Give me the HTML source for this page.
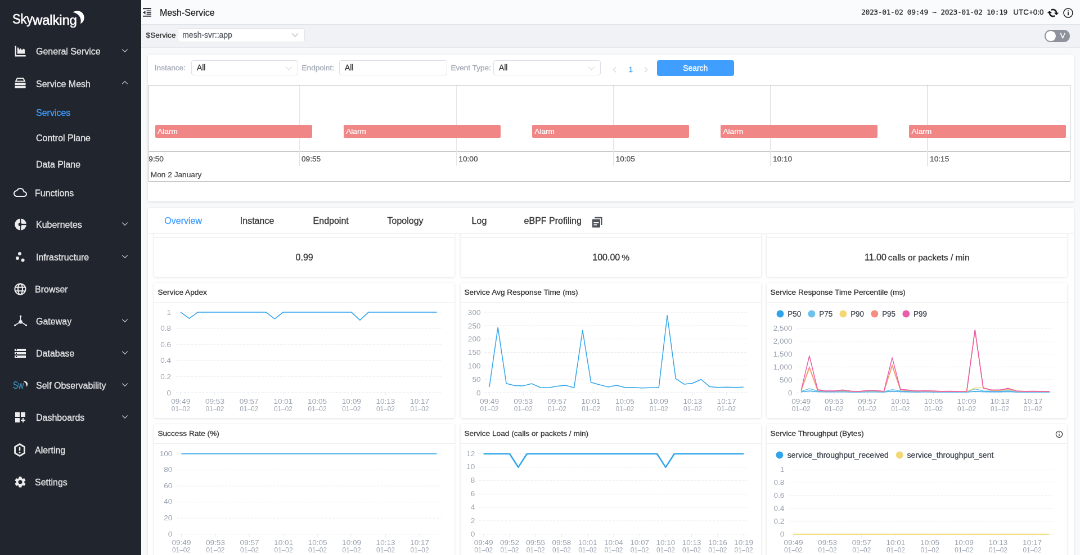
<!DOCTYPE html>
<html lang="en"><head><meta charset="utf-8"><title>Mesh-Service - SkyWalking</title>
<style>
*{box-sizing:border-box;margin:0;padding:0}
html,body{width:1080px;height:555px;overflow:hidden;background:#f7f9fa}
body{-webkit-text-stroke-width:.300px;font-family:"Liberation Sans",Arial,Helvetica,sans-serif;color:#3d444f;-webkit-font-smoothing:antialiased}
#root{will-change:transform;position:absolute;left:0;top:0;width:1920px;height:987px;transform:scale(.5625);transform-origin:0 0;overflow:hidden;background:#f7f9fa}
.abs{position:absolute}
.side{position:absolute;left:0;top:0;width:250.5px;height:987px;background:#21252d;color:#e3e4e6}
.mi{position:absolute;left:0;width:250px;height:56px;line-height:56px;font-size:16px;white-space:nowrap}
.mi .ic{position:absolute;left:24px;top:16px;width:24px;height:24px}
.mi .tx{position:absolute;left:64px;top:1.200px}
.mi.leaf .tx{left:62px}
.mi .chev{position:absolute;left:216px;top:21px;width:12px;height:12px}
.sub{position:absolute;left:64px;font-size:16px;height:46px;line-height:47.500px;white-space:nowrap}
.sub.on{color:#409eff}
.nav{position:absolute;left:250.5px;top:0;width:1669.5px;height:44px;background:#fafbfc;border-bottom:1px solid #dfe4e8}
.tool{position:absolute;left:250.5px;top:44px;width:1669.5px;height:41px;background:#f0f2f5;border-bottom:1px solid #e4e8ec}
.card{position:absolute;background:#fff;border-radius:3px;box-shadow:0 1px 4px 0 rgba(0,0,0,.13)}
.sel{position:absolute;background:#fff;border:1px solid #dcdfe6;border-radius:4px;font-size:13px;color:#303133;white-space:nowrap}
.sel .v{position:absolute;left:9px;top:1px;font-size:13.800px}
.sel svg{position:absolute;right:9px}
.lab{position:absolute;font-size:13.600px;color:#a4aab5;margin-top:.200px;white-space:nowrap}
.wt{position:absolute;left:6.100px;font-size:13.700px;color:#333;white-space:nowrap}
.num .u{font-size:15.500px;margin-left:3px}
svg text{-webkit-text-stroke-width:0;font-family:"Liberation Sans",Arial,sans-serif}
</style></head><body><div id="root">
<aside class="side"><div class="abs" style="left:22.5px;top:14px;height:44px;width:140px;color:#fff;white-space:nowrap;-webkit-text-stroke:.550px #fff">
<span class="abs" style="left:-1px;top:5.500px;font-size:23.5px;line-height:28px;transform:scaleX(.94);transform-origin:0 0;letter-spacing:-.3px">Sky</span>
<span class="abs" style="left:35.5px;top:8.000px;font-size:23px;line-height:28px;transform:scaleX(1.045);transform-origin:0 0;letter-spacing:-.2px">walking</span>
</div>
<svg class="abs" style="left:0;top:1.200px" width="160" height="60" viewBox="0 0 160 60"><path d="M129.200 20.800C134 17.300 141 17.300 145.200 20.800 149.300 24.300 150.600 30 149 34.600 148 37.600 146 40 142.900 41.300 144.600 36 143.600 31 140.600 27.200 137.700 23.600 134 21.600 129.200 20.800z" fill="#fff"/></svg><div class="mi" style="top:63.1px"><svg class="ic" viewBox="0 0 24 24"><path fill="#ededee" d="M2.6 2.6h2.3v16.3h16.8v2.5H2.6z"/><path fill="#ededee" d="M6.800 16.600V5.600h1.900l1.900 3.800 2.100-2.600 2.300 3.400 2.500-2.600 2.600 1.400v7.600z"/></svg><span class="tx">General Service</span><svg class="chev" viewBox="0 0 12 12"><path d="M1.2 3.6 6 8.4 10.8 3.6" fill="none" stroke="#c9cbd0" stroke-width="1.3"/></svg></div><div class="mi" style="top:120.4px"><svg class="ic" viewBox="0 0 24 24"><path fill="#ededee" d="M6 2.3h12l3.6 7.2H2.4zM7.2 4.3 5.6 7.6h12.8l-1.6-3.3z" fill-rule="evenodd"/><rect fill="#ededee" x="2.4" y="11" width="19.2" height="4" rx=".6"/><rect fill="#ededee" x="2.4" y="16.6" width="19.2" height="4.2" rx=".6"/></svg><span class="tx">Service Mesh</span><svg class="chev" viewBox="0 0 12 12"><path d="M1.2 8.4 6 3.6 10.8 8.4" fill="none" stroke="#c9cbd0" stroke-width="1.3"/></svg></div><div class="mi leaf" style="top:314.4px"><svg class="ic" viewBox="0 0 24 24"><path fill="#ededee" d="M19.35 10.04C18.67 6.59 15.64 4 12 4 9.11 4 6.6 5.64 5.35 8.04 2.34 8.36 0 10.91 0 14c0 3.31 2.69 6 6 6h13c2.76 0 5-2.24 5-5 0-2.64-2.05-4.78-4.65-4.96zM19 18H6c-2.21 0-4-1.79-4-4s1.79-4 4-4h.71C7.37 7.69 9.48 6 12 6c3.04 0 5.5 2.46 5.5 5.5v.5H19c1.66 0 3 1.34 3 3s-1.34 3-3 3z"/></svg><span class="tx">Functions</span></div><div class="mi" style="top:371.3px"><svg class="ic" viewBox="0 0 24 24" style="margin-top:-.600px"><circle cx="12.600" cy="12" r="10.400" fill="#ededee"/><path d="M12.600 1v22" stroke="#21252d" stroke-width="1.600"/><path d="M12.600 12H24" stroke="#21252d" stroke-width="2.300"/><circle cx="11.600" cy="12" r="3" fill="#21252d"/></svg><span class="tx">Kubernetes</span><svg class="chev" viewBox="0 0 12 12"><path d="M1.2 3.6 6 8.4 10.8 3.6" fill="none" stroke="#c9cbd0" stroke-width="1.3"/></svg></div><div class="mi" style="top:428.5px"><svg class="ic" viewBox="0 0 24 24"><circle fill="#ededee" cx="7" cy="14" r="3"/><circle fill="#ededee" cx="11" cy="6" r="3"/><circle fill="#ededee" cx="16.6" cy="17.6" r="3"/></svg><span class="tx">Infrastructure</span><svg class="chev" viewBox="0 0 12 12"><path d="M1.2 3.6 6 8.4 10.8 3.6" fill="none" stroke="#c9cbd0" stroke-width="1.3"/></svg></div><div class="mi leaf" style="top:485.8px"><svg class="ic" viewBox="0 0 24 24" fill="none" stroke="#ededee" stroke-width="2"><circle cx="12" cy="12" r="9.6"/><ellipse cx="12" cy="12" rx="4" ry="9.6"/><path d="M3.4 8.7h17.2M3.4 15.3h17.2"/></svg><span class="tx">Browser</span></div><div class="mi" style="top:543.0px"><svg class="ic" viewBox="0 0 24 24"><g stroke="#ededee" stroke-width="1.500" stroke-linecap="round"><path d="M12.6 13V3.4M12.6 13 3 19M12.6 13 22.2 19"/></g><circle cx="12.6" cy="13.2" r="3.200" fill="#ededee"/><circle cx="12.6" cy="3.2" r="1.6" fill="#ededee"/><circle cx="2.6" cy="19.4" r="1.6" fill="#ededee"/><circle cx="22.6" cy="19.4" r="1.6" fill="#ededee"/></svg><span class="tx">Gateway</span><svg class="chev" viewBox="0 0 12 12"><path d="M1.2 3.6 6 8.4 10.8 3.6" fill="none" stroke="#c9cbd0" stroke-width="1.3"/></svg></div><div class="mi" style="top:600.1px"><svg class="ic" viewBox="0 0 24 24"><path fill="#ededee" d="M2 20h20v-4H2v4zm2-3h2v2H4v-2zM2 4v4h20V4H2zm4 3H4V5h2v2zm-4 7h20v-4H2v4zm2-3h2v2H4v-2z"/></svg><span class="tx">Database</span><svg class="chev" viewBox="0 0 12 12"><path d="M1.2 3.6 6 8.4 10.8 3.6" fill="none" stroke="#c9cbd0" stroke-width="1.3"/></svg></div><div class="mi" style="top:657.3px"><svg class="ic" viewBox="0 0 24 24" style="overflow:visible"><text x="-1" y="18" font-size="17.500" fill="#3f9fd6" textLength="19.500" lengthAdjust="spacingAndGlyphs">Sw</text><path d="M18 5c3.800-.8 7 1.600 6.800 5.200-.1 1.600-.8 2.800-1.900 3.600.9-3.600-1-7-4.900-8.800z" fill="#f1f1f1" stroke="#f1f1f1" stroke-width=".8"/></svg><span class="tx">Self Observability</span><svg class="chev" viewBox="0 0 12 12"><path d="M1.2 3.6 6 8.4 10.8 3.6" fill="none" stroke="#c9cbd0" stroke-width="1.3"/></svg></div><div class="mi" style="top:714.2px"><svg class="ic" viewBox="0 0 24 24"><path fill="#ededee" d="M3 3h8v8H3zm10 0h8v8h-8zM3 13h8v8H3zm15 0h-2v3h-3v2h3v3h2v-3h3v-2h-3z"/></svg><span class="tx">Dashboards</span><svg class="chev" viewBox="0 0 12 12"><path d="M1.2 3.6 6 8.4 10.8 3.6" fill="none" stroke="#c9cbd0" stroke-width="1.3"/></svg></div><div class="mi leaf" style="top:771.5px"><svg class="ic" viewBox="0 0 24 24"><path d="M11 1.6 19.4 6.4V17.6L11 22.4 2.6 17.6V6.4z" fill="none" stroke="#ededee" stroke-width="2.900" stroke-linejoin="round"/><rect x="9.700" y="6.800" width="2.600" height="6.600" rx="1" fill="#ededee"/><circle cx="11" cy="16.400" r="1.500" fill="#ededee"/></svg><span class="tx">Alerting</span></div><div class="mi leaf" style="top:828.7px"><svg class="ic" viewBox="0 0 24 24"><path fill="#ededee" d="M19.14 12.94c.04-.3.06-.61.06-.94 0-.32-.02-.64-.07-.94l2.03-1.58c.18-.14.23-.41.12-.61l-1.92-3.32c-.12-.22-.37-.29-.59-.22l-2.39.96c-.5-.38-1.03-.7-1.62-.94l-.36-2.54c-.04-.24-.24-.41-.48-.41h-3.84c-.24 0-.43.17-.47.41l-.36 2.54c-.59.24-1.13.57-1.62.94l-2.39-.96c-.22-.08-.47 0-.59.22L2.74 8.87c-.12.21-.08.47.12.61l2.03 1.58c-.05.3-.09.63-.09.94s.02.64.07.94l-2.03 1.58c-.18.14-.23.41-.12.61l1.92 3.32c.12.22.37.29.59.22l2.39-.96c.5.38 1.03.7 1.62.94l.36 2.54c.05.24.24.41.48.41h3.84c.24 0 .44-.17.47-.41l.36-2.54c.59-.24 1.13-.56 1.62-.94l2.39.96c.22.08.47 0 .59-.22l1.92-3.32c.12-.22.07-.47-.12-.61l-2.01-1.58zM12 15.6c-1.98 0-3.6-1.62-3.6-3.6s1.62-3.6 3.6-3.6 3.6 1.62 3.6 3.6-1.62 3.6-3.6 3.6z"/></svg><span class="tx">Settings</span></div><div class="sub on" style="top:176.5px">Services</div><div class="sub" style="top:222.3px">Control Plane</div><div class="sub" style="top:268.6px">Data Plane</div></aside>
<header class="nav"></header><div class="tool"></div>
<svg class="abs" style="left:254px;top:13px" width="16" height="18" viewBox="0 0 16 18" fill="#2a2f36"><rect x=".5" y="1.100" width="14.500" height="2.100"/><rect x="6.600" y="5.500" width="8.400" height="1.600"/><rect x="6.600" y="8.500" width="8.400" height="1.600"/><rect x="6.600" y="11.400" width="8.400" height="1.600"/><rect x=".5" y="14.800" width="14.500" height="1.900"/><path d="M.5 9.300 4.500 5.800V12.800z"/></svg><div class="abs" style="left:283.9px;top:8.9px;font-size:16px;line-height:28px;color:#222;white-space:nowrap;-webkit-text-stroke:.25px #222">Mesh-Service</div><div class="abs" style="left:1531.1px;top:11.9px;font-family:'DejaVu Sans Mono','Liberation Mono',monospace;font-size:13px;letter-spacing:-.400px;line-height:20px;color:#222;white-space:pre;-webkit-text-stroke:.200px #222">2023-01-02 09:49 ~ 2023-01-02 10:19</div><div class="abs" style="left:1801.2px;top:12.0px;font-size:13.5px;line-height:20px;color:#222;white-space:nowrap">UTC+0:0</div><svg class="abs" style="left:1862.0px;top:13.3px" width="20" height="20" viewBox="0 0 24 24"><path transform="translate(12 12) scale(-1.04 1.04) translate(-12 -12)" fill="#111" d="M19 8l-4 4h3c0 3.310-2.690 6-6 6-1.010 0-1.970-.25-2.800-.7l-1.460 1.460C8.970 19.540 10.430 20 12 20c4.420 0 8-3.580 8-8h3l-4-4zM6 12c0-3.310 2.690-6 6-6 1.010 0 1.970.25 2.800.7l1.460-1.460C15.030 4.460 13.570 4 12 4c-4.420 0-8 3.580-8 8H1l4 4 4-4H6z" stroke="#111" stroke-width=".900"/></svg><svg class="abs" style="left:1888.5px;top:12.7px" width="20" height="20" viewBox="0 0 20 20"><circle cx="10" cy="10" r="8.000" fill="none" stroke="#1a1a1a" stroke-width="1.500"/><rect x="9.100" y="8.600" width="1.800" height="5.600" fill="#111"/><circle cx="10" cy="6.300" r="1.100" fill="#111"/></svg><div class="abs" style="left:259.6px;top:53.3px;font-size:13.600px;line-height:20px;color:#333;white-space:nowrap">$Service</div><div class="sel" style="left:315.7px;top:50.3px;width:226.5px;height:24.4px;line-height:22.4px;border-color:#dfe2e8;font-size:14px;color:#5a5e66"><span class="v" style="left:7.500px;top:0;font-size:14px">mesh-svr::app</span><svg style="top:5.2px;right:10px" width="13" height="12" viewBox="0 0 13 12"><path d="M1 3.500 6.500 9 12 3.500" fill="none" stroke="#b4b8bf" stroke-width="1.100"/></svg></div><div class="abs" style="left:1857.4px;top:52.8px;width:44.8px;height:21.9px;border-radius:10.9px;background:#8e939b"><div class="abs" style="left:2px;top:2px;width:17.9px;height:17.9px;border-radius:50%;background:#fff"></div><div class="abs" style="left:22.9px;top:0;width:18px;text-align:center;font-size:13.500px;line-height:21.9px;color:#fff">V</div></div>
<div class="card" style="left:262.8px;top:96.9px;width:1646.0px;height:261.5px;"></div><div class="lab" style="left:274.8px;top:110.9px;line-height:20px">Instance:</div><div class="sel" style="left:340.1px;top:107.4px;width:190.0px;height:26.7px;line-height:24.7px"><span class="v">All</span><svg style="top:6.3px" width="13" height="12" viewBox="0 0 13 12"><path d="M1 3.500 6.500 9 12 3.500" fill="none" stroke="#c3c7ce" stroke-width="1.000"/></svg></div><div class="lab" style="left:536.5px;top:110.9px;line-height:20px">Endpoint:</div><div class="sel" style="left:603.0px;top:107.4px;width:192.2px;height:26.7px;line-height:24.7px"><span class="v">All</span></div><div class="lab" style="left:801.4px;top:110.9px;line-height:20px">Event Type:</div><div class="sel" style="left:877.0px;top:107.4px;width:190.9px;height:26.7px;line-height:24.7px"><span class="v">All</span><svg style="top:6.3px" width="13" height="12" viewBox="0 0 13 12"><path d="M1 3.500 6.500 9 12 3.500" fill="none" stroke="#c3c7ce" stroke-width="1.000"/></svg></div><svg class="abs" style="left:1087.3px;top:117.6px" width="12" height="12" viewBox="0 0 12 12"><path d="M8 1.500 3.500 6 8 10.500" fill="none" stroke="#d3d6dc" stroke-width="1.200"/></svg><div class="abs" style="left:1111.2px;top:113.6px;width:20px;text-align:center;font-size:13.500px;line-height:20px;color:#409eff">1</div><svg class="abs" style="left:1141.9px;top:117.6px" width="12" height="12" viewBox="0 0 12 12"><path d="M4 1.500 8.500 6 4 10.500" fill="none" stroke="#d3d6dc" stroke-width="1.200"/></svg><div class="abs" style="left:1167.5px;top:107.2px;width:137.4px;height:27.9px;line-height:29.4px;background:#409eff;border-radius:4px;color:#fff;font-size:13.900px;text-align:center">Search</div><div class="abs" style="left:264.4px;top:151.1px;width:1638.2px;height:171.7px;border:1px solid #bfbfbf;overflow:hidden;font-size:13.700px;color:#4d4d4d"><div class="abs" style="left:0;top:116.7px;width:100%;height:1px;background:#bfbfbf"></div><div class="abs" style="left:-12.91px;top:0;width:1.778px;height:143.0px;background:#e6e6e6"></div><div class="abs" style="left:-8.7px;top:121.4px;line-height:20px;white-space:nowrap">09:50</div><div class="abs" style="left:266.20px;top:0;width:1.778px;height:143.0px;background:#e6e6e6"></div><div class="abs" style="left:270.6px;top:121.4px;line-height:20px;white-space:nowrap">09:55</div><div class="abs" style="left:545.31px;top:0;width:1.778px;height:143.0px;background:#e6e6e6"></div><div class="abs" style="left:549.9px;top:121.4px;line-height:20px;white-space:nowrap">10:00</div><div class="abs" style="left:824.42px;top:0;width:1.778px;height:143.0px;background:#e6e6e6"></div><div class="abs" style="left:829.2px;top:121.4px;line-height:20px;white-space:nowrap">10:05</div><div class="abs" style="left:1103.53px;top:0;width:1.778px;height:143.0px;background:#e6e6e6"></div><div class="abs" style="left:1108.5px;top:121.4px;line-height:20px;white-space:nowrap">10:10</div><div class="abs" style="left:1382.64px;top:0;width:1.778px;height:143.0px;background:#e6e6e6"></div><div class="abs" style="left:1387.7px;top:121.4px;line-height:20px;white-space:nowrap">10:15</div><div class="abs" style="left:2.4px;top:148.8px;line-height:20px;white-space:nowrap">Mon 2 January</div><div class="abs" style="left:10.2px;top:70.1px;width:279.1px;height:22.9px;line-height:23.8px;background:#f18686;border-radius:2px;color:#fff;padding-left:4.500px;font-size:13.700px;-webkit-text-stroke:.200px #fff;white-space:nowrap">Alarm</div><div class="abs" style="left:345.3px;top:70.1px;width:279.1px;height:22.9px;line-height:23.8px;background:#f18686;border-radius:2px;color:#fff;padding-left:4.500px;font-size:13.700px;-webkit-text-stroke:.200px #fff;white-space:nowrap">Alarm</div><div class="abs" style="left:680.4px;top:70.1px;width:279.1px;height:22.9px;line-height:23.8px;background:#f18686;border-radius:2px;color:#fff;padding-left:4.500px;font-size:13.700px;-webkit-text-stroke:.200px #fff;white-space:nowrap">Alarm</div><div class="abs" style="left:1015.5px;top:70.1px;width:279.1px;height:22.9px;line-height:23.8px;background:#f18686;border-radius:2px;color:#fff;padding-left:4.500px;font-size:13.700px;-webkit-text-stroke:.200px #fff;white-space:nowrap">Alarm</div><div class="abs" style="left:1350.6px;top:70.1px;width:279.1px;height:22.9px;line-height:23.8px;background:#f18686;border-radius:2px;color:#fff;padding-left:4.500px;font-size:13.700px;-webkit-text-stroke:.200px #fff;white-space:nowrap">Alarm</div></div>
<div class="card" style="left:262.6px;top:369.6px;width:1646.2px;height:643.7px;"></div><div class="abs" style="left:262.6px;top:414.9px;width:1646.2px;height:1px;background:#eaecef"></div><div class="abs" style="left:292.3px;top:377.9px;font-size:16px;line-height:30px;color:#409eff;white-space:nowrap">Overview</div><div class="abs" style="left:426.8px;top:377.9px;font-size:16px;line-height:30px;color:#333;white-space:nowrap">Instance</div><div class="abs" style="left:556.6px;top:377.9px;font-size:16px;line-height:30px;color:#333;white-space:nowrap">Endpoint</div><div class="abs" style="left:688.5px;top:377.9px;font-size:16px;line-height:30px;color:#333;white-space:nowrap">Topology</div><div class="abs" style="left:838.6px;top:377.9px;font-size:16px;line-height:30px;color:#333;white-space:nowrap">Log</div><div class="abs" style="left:931.6px;top:377.9px;font-size:16px;line-height:30px;color:#333;white-space:nowrap">eBPF Profiling</div><svg class="abs" style="left:1051.5px;top:384.5px" width="20" height="20" viewBox="0 0 20 20"><path fill="#50545b" d="M5.200 .8h13.300v14.200h-2.400V3.200H5.200z"/><path fill="#50545b" d="M1.800 4.800h12.200a1 1 0 0 1 1 1V18.600a1 1 0 0 1-1 1H1.800a1 1 0 0 1-1-1V5.800a1 1 0 0 1 1-1zM3.400 10v1.800h9V10zm0 3.800v1.800h6v-1.800z" fill-rule="evenodd"/></svg><div class="abs" style="left:262.6px;top:415.9px;width:1646.2px;height:571.7px;overflow:hidden"><div class="card" style="left:11.7px;top:-27.8px;width:533.7px;height:104.0px;box-shadow:0 1px 4px 0 rgba(0,0,0,.13)"><div class="abs" style="left:0;top:33.8px;width:100%;height:1px;background:#eee"></div><div class="abs num" style="left:0;top:57.9px;width:100%;text-align:center;line-height:24px;font-size:16px;color:#333;white-space:nowrap"><span>0.99</span></div></div><div class="card" style="left:556.8px;top:-27.8px;width:533.5px;height:104.0px;box-shadow:0 1px 4px 0 rgba(0,0,0,.13)"><div class="abs" style="left:0;top:33.8px;width:100%;height:1px;background:#eee"></div><div class="abs num" style="left:0;top:57.9px;width:100%;text-align:center;line-height:24px;font-size:16px;color:#333;white-space:nowrap"><span>100.00</span><span class="u">%</span></div></div><div class="card" style="left:1100.8px;top:-27.8px;width:533.7px;height:104.0px;box-shadow:0 1px 4px 0 rgba(0,0,0,.13)"><div class="abs" style="left:0;top:33.8px;width:100%;height:1px;background:#eee"></div><div class="abs num" style="left:0;top:57.9px;width:100%;text-align:center;line-height:24px;font-size:16px;color:#333;white-space:nowrap"><span>11.00</span><span class="u">calls or packets / min</span></div></div><div class="card" style="left:11.7px;top:87.2px;width:533.7px;height:239.8px;box-shadow:0 1px 4px 0 rgba(0,0,0,.13)"><div class="wt" style="top:6.7px;line-height:20px">Service Apdex</div><div class="abs" style="left:0;top:33.8px;width:100%;height:1px;background:#eff0f2"></div><svg class="abs" style="left:0;top:0" width="533.7" height="239.8" viewBox="0 0 533.7 239.8"><path d="M39.1 52.1H510.2" stroke="#e8ebf0" stroke-width="1" stroke-dasharray="4.400 2.200" fill="none"/><text x="30.1" y="56.9" text-anchor="end" font-size="13.600" fill="#9aa2af">1</text><path d="M39.1 80.6H510.2" stroke="#e8ebf0" stroke-width="1" stroke-dasharray="4.400 2.200" fill="none"/><text x="30.1" y="85.4" text-anchor="end" font-size="13.600" fill="#9aa2af">0.8</text><path d="M39.1 109.2H510.2" stroke="#e8ebf0" stroke-width="1" stroke-dasharray="4.400 2.200" fill="none"/><text x="30.1" y="114.0" text-anchor="end" font-size="13.600" fill="#9aa2af">0.6</text><path d="M39.1 137.7H510.2" stroke="#e8ebf0" stroke-width="1" stroke-dasharray="4.400 2.200" fill="none"/><text x="30.1" y="142.5" text-anchor="end" font-size="13.600" fill="#9aa2af">0.4</text><path d="M39.1 166.3H510.2" stroke="#e8ebf0" stroke-width="1" stroke-dasharray="4.400 2.200" fill="none"/><text x="30.1" y="171.1" text-anchor="end" font-size="13.600" fill="#9aa2af">0.2</text><path d="M39.1 194.8H510.2" stroke="#e8ebf0" stroke-width="1" stroke-dasharray="4.400 2.200" fill="none"/><text x="30.1" y="199.6" text-anchor="end" font-size="13.600" fill="#9aa2af">0</text><path d="M47.3 194.8v5.500" stroke="#e8ebf0" stroke-width="1" fill="none"/><text x="47.3" y="215.3" text-anchor="middle" font-size="13.600" fill="#9aa2af">09:49</text><text x="47.3" y="227.7" text-anchor="middle" font-size="13.600" fill="#9aa2af" textLength="33" lengthAdjust="spacingAndGlyphs">01–02</text><path d="M108.0 194.8v5.500" stroke="#e8ebf0" stroke-width="1" fill="none"/><text x="108.0" y="215.3" text-anchor="middle" font-size="13.600" fill="#9aa2af">09:53</text><text x="108.0" y="227.7" text-anchor="middle" font-size="13.600" fill="#9aa2af" textLength="33" lengthAdjust="spacingAndGlyphs">01–02</text><path d="M168.7 194.8v5.500" stroke="#e8ebf0" stroke-width="1" fill="none"/><text x="168.7" y="215.3" text-anchor="middle" font-size="13.600" fill="#9aa2af">09:57</text><text x="168.7" y="227.7" text-anchor="middle" font-size="13.600" fill="#9aa2af" textLength="33" lengthAdjust="spacingAndGlyphs">01–02</text><path d="M229.4 194.8v5.500" stroke="#e8ebf0" stroke-width="1" fill="none"/><text x="229.4" y="215.3" text-anchor="middle" font-size="13.600" fill="#9aa2af">10:01</text><text x="229.4" y="227.7" text-anchor="middle" font-size="13.600" fill="#9aa2af" textLength="33" lengthAdjust="spacingAndGlyphs">01–02</text><path d="M290.1 194.8v5.500" stroke="#e8ebf0" stroke-width="1" fill="none"/><text x="290.1" y="215.3" text-anchor="middle" font-size="13.600" fill="#9aa2af">10:05</text><text x="290.1" y="227.7" text-anchor="middle" font-size="13.600" fill="#9aa2af" textLength="33" lengthAdjust="spacingAndGlyphs">01–02</text><path d="M350.8 194.8v5.500" stroke="#e8ebf0" stroke-width="1" fill="none"/><text x="350.8" y="215.3" text-anchor="middle" font-size="13.600" fill="#9aa2af">10:09</text><text x="350.8" y="227.7" text-anchor="middle" font-size="13.600" fill="#9aa2af" textLength="33" lengthAdjust="spacingAndGlyphs">01–02</text><path d="M411.4 194.8v5.500" stroke="#e8ebf0" stroke-width="1" fill="none"/><text x="411.4" y="215.3" text-anchor="middle" font-size="13.600" fill="#9aa2af">10:13</text><text x="411.4" y="227.7" text-anchor="middle" font-size="13.600" fill="#9aa2af" textLength="33" lengthAdjust="spacingAndGlyphs">01–02</text><path d="M472.1 194.8v5.500" stroke="#e8ebf0" stroke-width="1" fill="none"/><text x="472.1" y="215.3" text-anchor="middle" font-size="13.600" fill="#9aa2af">10:17</text><text x="472.1" y="227.7" text-anchor="middle" font-size="13.600" fill="#9aa2af" textLength="33" lengthAdjust="spacingAndGlyphs">01–02</text><polyline points="47.3,52.1 62.5,63.2 77.6,52.1 92.8,52.1 108.0,52.1 123.2,52.1 138.3,52.1 153.5,52.1 168.7,52.1 183.8,52.1 199.0,52.1 214.2,63.9 229.4,52.1 244.5,52.1 259.7,52.1 274.9,52.1 290.1,52.1 305.2,52.1 320.4,52.1 335.6,52.1 350.8,52.1 365.9,66.1 381.1,52.1 396.3,52.1 411.4,52.1 426.6,52.1 441.8,52.1 457.0,52.1 472.1,52.1 487.3,52.1 502.5,52.1" fill="none" stroke="#30a4eb" stroke-width="1.5" stroke-linejoin="round"/></svg></div><div class="card" style="left:556.8px;top:87.2px;width:533.5px;height:239.8px;box-shadow:0 1px 4px 0 rgba(0,0,0,.13)"><div class="wt" style="top:6.7px;line-height:20px">Service Avg Response Time (ms)</div><div class="abs" style="left:0;top:33.8px;width:100%;height:1px;background:#eff0f2"></div><svg class="abs" style="left:0;top:0" width="533.5" height="239.8" viewBox="0 0 533.5 239.8"><path d="M42.3 52.1H510.8" stroke="#e8ebf0" stroke-width="1" stroke-dasharray="4.400 2.200" fill="none"/><text x="35.5" y="56.9" text-anchor="end" font-size="13.600" fill="#9aa2af">300</text><path d="M42.3 75.9H510.8" stroke="#e8ebf0" stroke-width="1" stroke-dasharray="4.400 2.200" fill="none"/><text x="35.5" y="80.7" text-anchor="end" font-size="13.600" fill="#9aa2af">250</text><path d="M42.3 99.7H510.8" stroke="#e8ebf0" stroke-width="1" stroke-dasharray="4.400 2.200" fill="none"/><text x="35.5" y="104.5" text-anchor="end" font-size="13.600" fill="#9aa2af">200</text><path d="M42.3 123.5H510.8" stroke="#e8ebf0" stroke-width="1" stroke-dasharray="4.400 2.200" fill="none"/><text x="35.5" y="128.3" text-anchor="end" font-size="13.600" fill="#9aa2af">150</text><path d="M42.3 147.3H510.8" stroke="#e8ebf0" stroke-width="1" stroke-dasharray="4.400 2.200" fill="none"/><text x="35.5" y="152.1" text-anchor="end" font-size="13.600" fill="#9aa2af">100</text><path d="M42.3 171.1H510.8" stroke="#e8ebf0" stroke-width="1" stroke-dasharray="4.400 2.200" fill="none"/><text x="35.5" y="175.9" text-anchor="end" font-size="13.600" fill="#9aa2af">50</text><path d="M42.3 194.8H510.8" stroke="#e8ebf0" stroke-width="1" stroke-dasharray="4.400 2.200" fill="none"/><text x="35.5" y="199.6" text-anchor="end" font-size="13.600" fill="#9aa2af">0</text><path d="M51.0 194.8v5.500" stroke="#e8ebf0" stroke-width="1" fill="none"/><text x="51.0" y="215.3" text-anchor="middle" font-size="13.600" fill="#9aa2af">09:49</text><text x="51.0" y="227.7" text-anchor="middle" font-size="13.600" fill="#9aa2af" textLength="33" lengthAdjust="spacingAndGlyphs">01–02</text><path d="M111.3 194.8v5.500" stroke="#e8ebf0" stroke-width="1" fill="none"/><text x="111.3" y="215.3" text-anchor="middle" font-size="13.600" fill="#9aa2af">09:53</text><text x="111.3" y="227.7" text-anchor="middle" font-size="13.600" fill="#9aa2af" textLength="33" lengthAdjust="spacingAndGlyphs">01–02</text><path d="M171.5 194.8v5.500" stroke="#e8ebf0" stroke-width="1" fill="none"/><text x="171.5" y="215.3" text-anchor="middle" font-size="13.600" fill="#9aa2af">09:57</text><text x="171.5" y="227.7" text-anchor="middle" font-size="13.600" fill="#9aa2af" textLength="33" lengthAdjust="spacingAndGlyphs">01–02</text><path d="M231.7 194.8v5.500" stroke="#e8ebf0" stroke-width="1" fill="none"/><text x="231.7" y="215.3" text-anchor="middle" font-size="13.600" fill="#9aa2af">10:01</text><text x="231.7" y="227.7" text-anchor="middle" font-size="13.600" fill="#9aa2af" textLength="33" lengthAdjust="spacingAndGlyphs">01–02</text><path d="M291.9 194.8v5.500" stroke="#e8ebf0" stroke-width="1" fill="none"/><text x="291.9" y="215.3" text-anchor="middle" font-size="13.600" fill="#9aa2af">10:05</text><text x="291.9" y="227.7" text-anchor="middle" font-size="13.600" fill="#9aa2af" textLength="33" lengthAdjust="spacingAndGlyphs">01–02</text><path d="M352.2 194.8v5.500" stroke="#e8ebf0" stroke-width="1" fill="none"/><text x="352.2" y="215.3" text-anchor="middle" font-size="13.600" fill="#9aa2af">10:09</text><text x="352.2" y="227.7" text-anchor="middle" font-size="13.600" fill="#9aa2af" textLength="33" lengthAdjust="spacingAndGlyphs">01–02</text><path d="M412.4 194.8v5.500" stroke="#e8ebf0" stroke-width="1" fill="none"/><text x="412.4" y="215.3" text-anchor="middle" font-size="13.600" fill="#9aa2af">10:13</text><text x="412.4" y="227.7" text-anchor="middle" font-size="13.600" fill="#9aa2af" textLength="33" lengthAdjust="spacingAndGlyphs">01–02</text><path d="M472.6 194.8v5.500" stroke="#e8ebf0" stroke-width="1" fill="none"/><text x="472.6" y="215.3" text-anchor="middle" font-size="13.600" fill="#9aa2af">10:17</text><text x="472.6" y="227.7" text-anchor="middle" font-size="13.600" fill="#9aa2af" textLength="33" lengthAdjust="spacingAndGlyphs">01–02</text><polyline points="51.0,184.9 66.1,79.2 81.1,178.7 96.2,182.5 111.3,182.9 126.3,179.1 141.4,185.8 156.4,186.3 171.5,183.4 186.5,182.0 201.6,186.3 216.7,84.4 231.7,176.8 246.8,181.0 261.8,184.9 276.9,182.0 291.9,185.8 307.0,185.8 322.1,186.8 337.1,186.3 352.2,186.3 367.2,57.8 382.3,170.1 397.4,180.1 412.4,178.2 427.5,171.5 442.5,184.4 457.6,185.8 472.6,185.3 487.7,185.8 502.8,185.3" fill="none" stroke="#30a4eb" stroke-width="1.5" stroke-linejoin="round"/></svg></div><div class="card" style="left:1100.8px;top:87.2px;width:533.7px;height:239.8px;box-shadow:0 1px 4px 0 rgba(0,0,0,.13)"><div class="wt" style="top:6.7px;line-height:20px">Service Response Time Percentile (ms)</div><div class="abs" style="left:0;top:33.8px;width:100%;height:1px;background:#eff0f2"></div><svg class="abs" style="left:0;top:0" width="533.7" height="239.8" viewBox="0 0 533.7 239.8"><path d="M52.4 80.7H510.8" stroke="#e8ebf0" stroke-width="1" stroke-dasharray="4.400 2.200" fill="none"/><text x="45.6" y="85.5" text-anchor="end" font-size="13.600" fill="#9aa2af">2,500</text><path d="M52.4 103.5H510.8" stroke="#e8ebf0" stroke-width="1" stroke-dasharray="4.400 2.200" fill="none"/><text x="45.6" y="108.3" text-anchor="end" font-size="13.600" fill="#9aa2af">2,000</text><path d="M52.4 126.4H510.8" stroke="#e8ebf0" stroke-width="1" stroke-dasharray="4.400 2.200" fill="none"/><text x="45.6" y="131.2" text-anchor="end" font-size="13.600" fill="#9aa2af">1,500</text><path d="M52.4 149.2H510.8" stroke="#e8ebf0" stroke-width="1" stroke-dasharray="4.400 2.200" fill="none"/><text x="45.6" y="154.0" text-anchor="end" font-size="13.600" fill="#9aa2af">1,000</text><path d="M52.4 172.0H510.8" stroke="#e8ebf0" stroke-width="1" stroke-dasharray="4.400 2.200" fill="none"/><text x="45.6" y="176.8" text-anchor="end" font-size="13.600" fill="#9aa2af">500</text><path d="M52.4 194.8H510.8" stroke="#e8ebf0" stroke-width="1" stroke-dasharray="4.400 2.200" fill="none"/><text x="45.6" y="199.6" text-anchor="end" font-size="13.600" fill="#9aa2af">0</text><path d="M61.2 194.8v5.500" stroke="#e8ebf0" stroke-width="1" fill="none"/><text x="61.2" y="215.3" text-anchor="middle" font-size="13.600" fill="#9aa2af">09:49</text><text x="61.2" y="227.7" text-anchor="middle" font-size="13.600" fill="#9aa2af" textLength="33" lengthAdjust="spacingAndGlyphs">01–02</text><path d="M120.0 194.8v5.500" stroke="#e8ebf0" stroke-width="1" fill="none"/><text x="120.0" y="215.3" text-anchor="middle" font-size="13.600" fill="#9aa2af">09:53</text><text x="120.0" y="227.7" text-anchor="middle" font-size="13.600" fill="#9aa2af" textLength="33" lengthAdjust="spacingAndGlyphs">01–02</text><path d="M178.9 194.8v5.500" stroke="#e8ebf0" stroke-width="1" fill="none"/><text x="178.9" y="215.3" text-anchor="middle" font-size="13.600" fill="#9aa2af">09:57</text><text x="178.9" y="227.7" text-anchor="middle" font-size="13.600" fill="#9aa2af" textLength="33" lengthAdjust="spacingAndGlyphs">01–02</text><path d="M237.8 194.8v5.500" stroke="#e8ebf0" stroke-width="1" fill="none"/><text x="237.8" y="215.3" text-anchor="middle" font-size="13.600" fill="#9aa2af">10:01</text><text x="237.8" y="227.7" text-anchor="middle" font-size="13.600" fill="#9aa2af" textLength="33" lengthAdjust="spacingAndGlyphs">01–02</text><path d="M296.7 194.8v5.500" stroke="#e8ebf0" stroke-width="1" fill="none"/><text x="296.7" y="215.3" text-anchor="middle" font-size="13.600" fill="#9aa2af">10:05</text><text x="296.7" y="227.7" text-anchor="middle" font-size="13.600" fill="#9aa2af" textLength="33" lengthAdjust="spacingAndGlyphs">01–02</text><path d="M355.6 194.8v5.500" stroke="#e8ebf0" stroke-width="1" fill="none"/><text x="355.6" y="215.3" text-anchor="middle" font-size="13.600" fill="#9aa2af">10:09</text><text x="355.6" y="227.7" text-anchor="middle" font-size="13.600" fill="#9aa2af" textLength="33" lengthAdjust="spacingAndGlyphs">01–02</text><path d="M414.4 194.8v5.500" stroke="#e8ebf0" stroke-width="1" fill="none"/><text x="414.4" y="215.3" text-anchor="middle" font-size="13.600" fill="#9aa2af">10:13</text><text x="414.4" y="227.7" text-anchor="middle" font-size="13.600" fill="#9aa2af" textLength="33" lengthAdjust="spacingAndGlyphs">01–02</text><path d="M473.3 194.8v5.500" stroke="#e8ebf0" stroke-width="1" fill="none"/><text x="473.3" y="215.3" text-anchor="middle" font-size="13.600" fill="#9aa2af">10:17</text><text x="473.3" y="227.7" text-anchor="middle" font-size="13.600" fill="#9aa2af" textLength="33" lengthAdjust="spacingAndGlyphs">01–02</text><polyline points="61.2,193.7 75.9,191.9 90.6,193.5 105.3,193.8 120.0,193.8 134.8,193.6 149.5,193.9 164.2,194.1 178.9,193.7 193.6,193.7 208.4,194.0 223.1,192.6 237.8,193.5 252.5,193.7 267.2,193.9 282.0,193.8 296.7,193.9 311.4,194.0 326.1,194.0 340.8,194.1 355.6,194.0 370.3,193.0 385.0,193.4 399.7,193.7 414.4,193.7 429.2,193.3 443.9,193.9 458.6,194.0 473.3,194.0 488.0,194.0 502.8,194.0" fill="none" stroke="#30a4eb" stroke-width="1.5" stroke-linejoin="round"/><polyline points="61.2,192.6 75.9,188.0 90.6,192.1 105.3,193.0 120.0,193.0 134.8,192.6 149.5,193.2 164.2,193.6 178.9,192.8 193.6,192.8 208.4,193.5 223.1,189.8 237.8,191.9 252.5,192.6 267.2,193.1 282.0,192.9 296.7,193.2 311.4,193.5 326.1,193.4 340.8,193.6 355.6,193.5 370.3,188.6 385.0,192.1 399.7,192.6 414.4,192.6 429.2,191.6 443.9,193.1 458.6,193.5 473.3,193.4 488.0,193.5 502.8,193.5" fill="none" stroke="#6ec1ea" stroke-width="1.5" stroke-linejoin="round"/><polyline points="61.2,191.6 75.9,152.2 90.6,191.2 105.3,192.3 120.0,192.3 134.8,191.4 149.5,192.7 164.2,193.2 178.9,192.0 193.6,192.0 208.4,193.0 223.1,148.5 237.8,190.5 252.5,191.6 267.2,192.5 282.0,192.2 296.7,192.7 311.4,193.0 326.1,192.9 340.8,193.2 355.6,193.0 370.3,186.4 385.0,186.6 399.7,191.2 414.4,191.2 429.2,189.4 443.9,192.5 458.6,193.0 473.3,192.9 488.0,193.0 502.8,193.0" fill="none" stroke="#f3d774" stroke-width="1.5" stroke-linejoin="round"/><polyline points="61.2,191.4 75.9,149.6 90.6,190.7 105.3,192.1 120.0,192.1 134.8,191.0 149.5,192.6 164.2,193.1 178.9,191.6 193.6,191.6 208.4,192.9 223.1,146.0 237.8,190.1 252.5,191.2 267.2,192.2 282.0,191.9 296.7,192.5 311.4,192.9 326.1,192.8 340.8,193.1 355.6,192.9 370.3,83.7 385.0,186.9 399.7,190.7 414.4,190.7 429.2,188.0 443.9,192.2 458.6,192.9 473.3,192.8 488.0,192.9 502.8,192.9" fill="none" stroke="#f58e7e" stroke-width="1.5" stroke-linejoin="round"/><polyline points="61.2,191.2 75.9,129.7 90.6,189.8 105.3,191.9 120.0,191.9 134.8,190.3 149.5,192.3 164.2,193.0 178.9,191.2 193.6,191.2 208.4,192.8 223.1,132.9 237.8,189.1 252.5,190.5 267.2,191.9 282.0,191.4 296.7,192.1 311.4,192.8 326.1,192.6 340.8,193.0 355.6,192.8 370.3,83.7 385.0,186.6 399.7,190.3 414.4,190.3 429.2,187.3 443.9,191.9 458.6,192.8 473.3,192.6 488.0,192.8 502.8,192.8" fill="none" stroke="#e85cab" stroke-width="1.5" stroke-linejoin="round"/><circle cx="24.0" cy="54.9" r="6.500" fill="#30a4eb"/><text x="37.3" y="59.7" font-size="13.800" fill="#3b424c" stroke="#3b424c" stroke-width=".250" textLength="23.8" lengthAdjust="spacingAndGlyphs">P50</text><circle cx="79.9" cy="54.9" r="6.500" fill="#6ec1ea"/><text x="93.3" y="59.7" font-size="13.800" fill="#3b424c" stroke="#3b424c" stroke-width=".250" textLength="23.8" lengthAdjust="spacingAndGlyphs">P75</text><circle cx="135.9" cy="54.9" r="6.500" fill="#f3d774"/><text x="149.2" y="59.7" font-size="13.800" fill="#3b424c" stroke="#3b424c" stroke-width=".250" textLength="23.8" lengthAdjust="spacingAndGlyphs">P90</text><circle cx="191.8" cy="54.9" r="6.500" fill="#f58e7e"/><text x="205.2" y="59.7" font-size="13.800" fill="#3b424c" stroke="#3b424c" stroke-width=".250" textLength="23.8" lengthAdjust="spacingAndGlyphs">P95</text><circle cx="247.8" cy="54.9" r="6.500" fill="#e85cab"/><text x="261.1" y="59.7" font-size="13.800" fill="#3b424c" stroke="#3b424c" stroke-width=".250" textLength="23.8" lengthAdjust="spacingAndGlyphs">P99</text></svg></div><div class="card" style="left:11.7px;top:338.6px;width:533.7px;height:241.1px;box-shadow:0 1px 4px 0 rgba(0,0,0,.13)"><div class="wt" style="top:6.7px;line-height:20px">Success Rate (%)</div><div class="abs" style="left:0;top:33.8px;width:100%;height:1px;background:#eff0f2"></div><svg class="abs" style="left:0;top:0" width="533.7" height="241.1" viewBox="0 0 533.7 241.1"><path d="M39.8 52.8H510.2" stroke="#e8ebf0" stroke-width="1" stroke-dasharray="4.400 2.200" fill="none"/><text x="32.4" y="56.7" text-anchor="end" font-size="13.600" fill="#9aa2af">100</text><path d="M39.8 81.4H510.2" stroke="#e8ebf0" stroke-width="1" stroke-dasharray="4.400 2.200" fill="none"/><text x="32.4" y="85.3" text-anchor="end" font-size="13.600" fill="#9aa2af">80</text><path d="M39.8 110.0H510.2" stroke="#e8ebf0" stroke-width="1" stroke-dasharray="4.400 2.200" fill="none"/><text x="32.4" y="113.9" text-anchor="end" font-size="13.600" fill="#9aa2af">60</text><path d="M39.8 138.6H510.2" stroke="#e8ebf0" stroke-width="1" stroke-dasharray="4.400 2.200" fill="none"/><text x="32.4" y="142.5" text-anchor="end" font-size="13.600" fill="#9aa2af">40</text><path d="M39.8 167.1H510.2" stroke="#e8ebf0" stroke-width="1" stroke-dasharray="4.400 2.200" fill="none"/><text x="32.4" y="171.0" text-anchor="end" font-size="13.600" fill="#9aa2af">20</text><path d="M39.8 195.7H510.2" stroke="#e8ebf0" stroke-width="1" stroke-dasharray="4.400 2.200" fill="none"/><text x="32.4" y="199.6" text-anchor="end" font-size="13.600" fill="#9aa2af">0</text><path d="M48.5 195.7v5.500" stroke="#e8ebf0" stroke-width="1" fill="none"/><text x="48.5" y="215.3" text-anchor="middle" font-size="13.600" fill="#9aa2af">09:49</text><text x="48.5" y="227.7" text-anchor="middle" font-size="13.600" fill="#9aa2af" textLength="33" lengthAdjust="spacingAndGlyphs">01–02</text><path d="M109.0 195.7v5.500" stroke="#e8ebf0" stroke-width="1" fill="none"/><text x="109.0" y="215.3" text-anchor="middle" font-size="13.600" fill="#9aa2af">09:53</text><text x="109.0" y="227.7" text-anchor="middle" font-size="13.600" fill="#9aa2af" textLength="33" lengthAdjust="spacingAndGlyphs">01–02</text><path d="M169.6 195.7v5.500" stroke="#e8ebf0" stroke-width="1" fill="none"/><text x="169.6" y="215.3" text-anchor="middle" font-size="13.600" fill="#9aa2af">09:57</text><text x="169.6" y="227.7" text-anchor="middle" font-size="13.600" fill="#9aa2af" textLength="33" lengthAdjust="spacingAndGlyphs">01–02</text><path d="M230.1 195.7v5.500" stroke="#e8ebf0" stroke-width="1" fill="none"/><text x="230.1" y="215.3" text-anchor="middle" font-size="13.600" fill="#9aa2af">10:01</text><text x="230.1" y="227.7" text-anchor="middle" font-size="13.600" fill="#9aa2af" textLength="33" lengthAdjust="spacingAndGlyphs">01–02</text><path d="M290.6 195.7v5.500" stroke="#e8ebf0" stroke-width="1" fill="none"/><text x="290.6" y="215.3" text-anchor="middle" font-size="13.600" fill="#9aa2af">10:05</text><text x="290.6" y="227.7" text-anchor="middle" font-size="13.600" fill="#9aa2af" textLength="33" lengthAdjust="spacingAndGlyphs">01–02</text><path d="M351.1 195.7v5.500" stroke="#e8ebf0" stroke-width="1" fill="none"/><text x="351.1" y="215.3" text-anchor="middle" font-size="13.600" fill="#9aa2af">10:09</text><text x="351.1" y="227.7" text-anchor="middle" font-size="13.600" fill="#9aa2af" textLength="33" lengthAdjust="spacingAndGlyphs">01–02</text><path d="M411.6 195.7v5.500" stroke="#e8ebf0" stroke-width="1" fill="none"/><text x="411.6" y="215.3" text-anchor="middle" font-size="13.600" fill="#9aa2af">10:13</text><text x="411.6" y="227.7" text-anchor="middle" font-size="13.600" fill="#9aa2af" textLength="33" lengthAdjust="spacingAndGlyphs">01–02</text><path d="M472.1 195.7v5.500" stroke="#e8ebf0" stroke-width="1" fill="none"/><text x="472.1" y="215.3" text-anchor="middle" font-size="13.600" fill="#9aa2af">10:17</text><text x="472.1" y="227.7" text-anchor="middle" font-size="13.600" fill="#9aa2af" textLength="33" lengthAdjust="spacingAndGlyphs">01–02</text><polyline points="48.5,52.8 63.7,52.8 78.8,52.8 93.9,52.8 109.0,52.8 124.2,52.8 139.3,52.8 154.4,52.8 169.6,52.8 184.7,52.8 199.8,52.8 215.0,52.8 230.1,52.8 245.2,52.8 260.3,52.8 275.5,52.8 290.6,52.8 305.7,52.8 320.9,52.8 336.0,52.8 351.1,52.8 366.2,52.8 381.4,52.8 396.5,52.8 411.6,52.8 426.8,52.8 441.9,52.8 457.0,52.8 472.1,52.8 487.3,52.8 502.4,52.8" fill="none" stroke="#30a4eb" stroke-width="1.5" stroke-linejoin="round"/></svg></div><div class="card" style="left:556.8px;top:338.6px;width:533.5px;height:241.1px;box-shadow:0 1px 4px 0 rgba(0,0,0,.13)"><div class="wt" style="top:6.7px;line-height:20px">Service Load (calls or packets / min)</div><div class="abs" style="left:0;top:33.8px;width:100%;height:1px;background:#eff0f2"></div><svg class="abs" style="left:0;top:0" width="533.5" height="241.1" viewBox="0 0 533.5 241.1"><path d="M32.2 52.8H510.8" stroke="#e8ebf0" stroke-width="1" stroke-dasharray="4.400 2.200" fill="none"/><text x="25.3" y="56.7" text-anchor="end" font-size="13.600" fill="#9aa2af">12</text><path d="M32.2 76.6H510.8" stroke="#e8ebf0" stroke-width="1" stroke-dasharray="4.400 2.200" fill="none"/><text x="25.3" y="80.5" text-anchor="end" font-size="13.600" fill="#9aa2af">10</text><path d="M32.2 100.4H510.8" stroke="#e8ebf0" stroke-width="1" stroke-dasharray="4.400 2.200" fill="none"/><text x="25.3" y="104.3" text-anchor="end" font-size="13.600" fill="#9aa2af">8</text><path d="M32.2 124.3H510.8" stroke="#e8ebf0" stroke-width="1" stroke-dasharray="4.400 2.200" fill="none"/><text x="25.3" y="128.2" text-anchor="end" font-size="13.600" fill="#9aa2af">6</text><path d="M32.2 148.1H510.8" stroke="#e8ebf0" stroke-width="1" stroke-dasharray="4.400 2.200" fill="none"/><text x="25.3" y="152.0" text-anchor="end" font-size="13.600" fill="#9aa2af">4</text><path d="M32.2 171.9H510.8" stroke="#e8ebf0" stroke-width="1" stroke-dasharray="4.400 2.200" fill="none"/><text x="25.3" y="175.8" text-anchor="end" font-size="13.600" fill="#9aa2af">2</text><path d="M32.2 195.7H510.8" stroke="#e8ebf0" stroke-width="1" stroke-dasharray="4.400 2.200" fill="none"/><text x="25.3" y="199.6" text-anchor="end" font-size="13.600" fill="#9aa2af">0</text><path d="M40.7 195.7v5.500" stroke="#e8ebf0" stroke-width="1" fill="none"/><text x="40.7" y="215.3" text-anchor="middle" font-size="13.600" fill="#9aa2af">09:49</text><text x="40.7" y="227.7" text-anchor="middle" font-size="13.600" fill="#9aa2af" textLength="33" lengthAdjust="spacingAndGlyphs">01–02</text><path d="M87.0 195.7v5.500" stroke="#e8ebf0" stroke-width="1" fill="none"/><text x="87.0" y="215.3" text-anchor="middle" font-size="13.600" fill="#9aa2af">09:52</text><text x="87.0" y="227.7" text-anchor="middle" font-size="13.600" fill="#9aa2af" textLength="33" lengthAdjust="spacingAndGlyphs">01–02</text><path d="M133.2 195.7v5.500" stroke="#e8ebf0" stroke-width="1" fill="none"/><text x="133.2" y="215.3" text-anchor="middle" font-size="13.600" fill="#9aa2af">09:55</text><text x="133.2" y="227.7" text-anchor="middle" font-size="13.600" fill="#9aa2af" textLength="33" lengthAdjust="spacingAndGlyphs">01–02</text><path d="M179.4 195.7v5.500" stroke="#e8ebf0" stroke-width="1" fill="none"/><text x="179.4" y="215.3" text-anchor="middle" font-size="13.600" fill="#9aa2af">09:58</text><text x="179.4" y="227.7" text-anchor="middle" font-size="13.600" fill="#9aa2af" textLength="33" lengthAdjust="spacingAndGlyphs">01–02</text><path d="M225.7 195.7v5.500" stroke="#e8ebf0" stroke-width="1" fill="none"/><text x="225.7" y="215.3" text-anchor="middle" font-size="13.600" fill="#9aa2af">10:01</text><text x="225.7" y="227.7" text-anchor="middle" font-size="13.600" fill="#9aa2af" textLength="33" lengthAdjust="spacingAndGlyphs">01–02</text><path d="M271.9 195.7v5.500" stroke="#e8ebf0" stroke-width="1" fill="none"/><text x="271.9" y="215.3" text-anchor="middle" font-size="13.600" fill="#9aa2af">10:04</text><text x="271.9" y="227.7" text-anchor="middle" font-size="13.600" fill="#9aa2af" textLength="33" lengthAdjust="spacingAndGlyphs">01–02</text><path d="M318.2 195.7v5.500" stroke="#e8ebf0" stroke-width="1" fill="none"/><text x="318.2" y="215.3" text-anchor="middle" font-size="13.600" fill="#9aa2af">10:07</text><text x="318.2" y="227.7" text-anchor="middle" font-size="13.600" fill="#9aa2af" textLength="33" lengthAdjust="spacingAndGlyphs">01–02</text><path d="M364.4 195.7v5.500" stroke="#e8ebf0" stroke-width="1" fill="none"/><text x="364.4" y="215.3" text-anchor="middle" font-size="13.600" fill="#9aa2af">10:10</text><text x="364.4" y="227.7" text-anchor="middle" font-size="13.600" fill="#9aa2af" textLength="33" lengthAdjust="spacingAndGlyphs">01–02</text><path d="M410.6 195.7v5.500" stroke="#e8ebf0" stroke-width="1" fill="none"/><text x="410.6" y="215.3" text-anchor="middle" font-size="13.600" fill="#9aa2af">10:13</text><text x="410.6" y="227.7" text-anchor="middle" font-size="13.600" fill="#9aa2af" textLength="33" lengthAdjust="spacingAndGlyphs">01–02</text><path d="M456.9 195.7v5.500" stroke="#e8ebf0" stroke-width="1" fill="none"/><text x="456.9" y="215.3" text-anchor="middle" font-size="13.600" fill="#9aa2af">10:16</text><text x="456.9" y="227.7" text-anchor="middle" font-size="13.600" fill="#9aa2af" textLength="33" lengthAdjust="spacingAndGlyphs">01–02</text><path d="M503.1 195.7v5.500" stroke="#e8ebf0" stroke-width="1" fill="none"/><text x="503.1" y="215.3" text-anchor="middle" font-size="13.600" fill="#9aa2af">10:19</text><text x="503.1" y="227.7" text-anchor="middle" font-size="13.600" fill="#9aa2af" textLength="33" lengthAdjust="spacingAndGlyphs">01–02</text><polyline points="40.7,52.8 56.1,52.8 71.5,52.8 87.0,52.8 102.4,76.6 117.8,52.8 133.2,52.8 148.6,52.8 164.0,52.8 179.4,52.8 194.8,52.8 210.3,52.8 225.7,52.8 241.1,52.8 256.5,52.8 271.9,52.8 287.3,52.8 302.7,52.8 318.2,52.8 333.6,52.8 349.0,52.8 364.4,76.6 379.8,52.8 395.2,52.8 410.6,52.8 426.0,52.8 441.5,52.8 456.9,52.8 472.3,52.8 487.7,52.8 503.1,52.8" fill="none" stroke="#30a4eb" stroke-width="2.6" stroke-linejoin="round"/></svg></div><div class="card" style="left:1100.8px;top:338.6px;width:533.7px;height:241.1px;box-shadow:0 1px 4px 0 rgba(0,0,0,.13)"><div class="wt" style="top:6.7px;line-height:20px">Service Throughput (Bytes)</div><div class="abs" style="left:0;top:33.8px;width:100%;height:1px;background:#eff0f2"></div><svg class="abs" style="left:511.6px;top:9.2px" width="16" height="16" viewBox="0 0 16 16"><circle cx="8" cy="8" r="5.600" fill="none" stroke="#333" stroke-width="1.200"/><rect x="7.400" y="7.200" width="1.200" height="3.800" fill="#333"/><circle cx="8" cy="5.400" r=".8" fill="#333"/></svg><svg class="abs" style="left:0;top:0" width="533.7" height="241.1" viewBox="0 0 533.7 241.1"><path d="M38.8 81.4H510.8" stroke="#e8ebf0" stroke-width="1" stroke-dasharray="4.400 2.200" fill="none"/><text x="31.4" y="85.3" text-anchor="end" font-size="13.600" fill="#9aa2af">1</text><path d="M38.8 104.3H510.8" stroke="#e8ebf0" stroke-width="1" stroke-dasharray="4.400 2.200" fill="none"/><text x="31.4" y="108.2" text-anchor="end" font-size="13.600" fill="#9aa2af">0.8</text><path d="M38.8 127.1H510.8" stroke="#e8ebf0" stroke-width="1" stroke-dasharray="4.400 2.200" fill="none"/><text x="31.4" y="131.0" text-anchor="end" font-size="13.600" fill="#9aa2af">0.6</text><path d="M38.8 150.0H510.8" stroke="#e8ebf0" stroke-width="1" stroke-dasharray="4.400 2.200" fill="none"/><text x="31.4" y="153.9" text-anchor="end" font-size="13.600" fill="#9aa2af">0.4</text><path d="M38.8 172.9H510.8" stroke="#e8ebf0" stroke-width="1" stroke-dasharray="4.400 2.200" fill="none"/><text x="31.4" y="176.8" text-anchor="end" font-size="13.600" fill="#9aa2af">0.2</text><path d="M38.8 195.7H510.8" stroke="#e8ebf0" stroke-width="1" stroke-dasharray="4.400 2.200" fill="none"/><text x="31.4" y="199.6" text-anchor="end" font-size="13.600" fill="#9aa2af">0</text><path d="M47.5 195.7v5.500" stroke="#e8ebf0" stroke-width="1" fill="none"/><text x="47.5" y="215.3" text-anchor="middle" font-size="13.600" fill="#9aa2af">09:49</text><text x="47.5" y="227.7" text-anchor="middle" font-size="13.600" fill="#9aa2af" textLength="33" lengthAdjust="spacingAndGlyphs">01–02</text><path d="M108.1 195.7v5.500" stroke="#e8ebf0" stroke-width="1" fill="none"/><text x="108.1" y="215.3" text-anchor="middle" font-size="13.600" fill="#9aa2af">09:53</text><text x="108.1" y="227.7" text-anchor="middle" font-size="13.600" fill="#9aa2af" textLength="33" lengthAdjust="spacingAndGlyphs">01–02</text><path d="M168.8 195.7v5.500" stroke="#e8ebf0" stroke-width="1" fill="none"/><text x="168.8" y="215.3" text-anchor="middle" font-size="13.600" fill="#9aa2af">09:57</text><text x="168.8" y="227.7" text-anchor="middle" font-size="13.600" fill="#9aa2af" textLength="33" lengthAdjust="spacingAndGlyphs">01–02</text><path d="M229.4 195.7v5.500" stroke="#e8ebf0" stroke-width="1" fill="none"/><text x="229.4" y="215.3" text-anchor="middle" font-size="13.600" fill="#9aa2af">10:01</text><text x="229.4" y="227.7" text-anchor="middle" font-size="13.600" fill="#9aa2af" textLength="33" lengthAdjust="spacingAndGlyphs">01–02</text><path d="M290.1 195.7v5.500" stroke="#e8ebf0" stroke-width="1" fill="none"/><text x="290.1" y="215.3" text-anchor="middle" font-size="13.600" fill="#9aa2af">10:05</text><text x="290.1" y="227.7" text-anchor="middle" font-size="13.600" fill="#9aa2af" textLength="33" lengthAdjust="spacingAndGlyphs">01–02</text><path d="M350.8 195.7v5.500" stroke="#e8ebf0" stroke-width="1" fill="none"/><text x="350.8" y="215.3" text-anchor="middle" font-size="13.600" fill="#9aa2af">10:09</text><text x="350.8" y="227.7" text-anchor="middle" font-size="13.600" fill="#9aa2af" textLength="33" lengthAdjust="spacingAndGlyphs">01–02</text><path d="M411.4 195.7v5.500" stroke="#e8ebf0" stroke-width="1" fill="none"/><text x="411.4" y="215.3" text-anchor="middle" font-size="13.600" fill="#9aa2af">10:13</text><text x="411.4" y="227.7" text-anchor="middle" font-size="13.600" fill="#9aa2af" textLength="33" lengthAdjust="spacingAndGlyphs">01–02</text><path d="M472.1 195.7v5.500" stroke="#e8ebf0" stroke-width="1" fill="none"/><text x="472.1" y="215.3" text-anchor="middle" font-size="13.600" fill="#9aa2af">10:17</text><text x="472.1" y="227.7" text-anchor="middle" font-size="13.600" fill="#9aa2af" textLength="33" lengthAdjust="spacingAndGlyphs">01–02</text><polyline points="47.5,195.7 62.6,195.7 77.8,195.7 93.0,195.7 108.1,195.7 123.3,195.7 138.5,195.7 153.6,195.7 168.8,195.7 183.9,195.7 199.1,195.7 214.3,195.7 229.4,195.7 244.6,195.7 259.8,195.7 274.9,195.7 290.1,195.7 305.3,195.7 320.4,195.7 335.6,195.7 350.8,195.7 365.9,195.7 381.1,195.7 396.2,195.7 411.4,195.7 426.6,195.7 441.7,195.7 456.9,195.7 472.1,195.7 487.2,195.7 502.4,195.7" fill="none" stroke="#f3d774" stroke-width="2" stroke-linejoin="round"/><circle cx="22.9" cy="54.9" r="6.500" fill="#30a4eb"/><text x="36.8" y="59.7" font-size="13.800" fill="#3b424c" stroke="#3b424c" stroke-width=".250" textLength="180.1" lengthAdjust="spacingAndGlyphs">service_throughput_received</text><circle cx="236.3" cy="54.9" r="6.500" fill="#f3d774"/><text x="249.6" y="59.7" font-size="13.800" fill="#3b424c" stroke="#3b424c" stroke-width=".250" textLength="153.8" lengthAdjust="spacingAndGlyphs">service_throughput_sent</text></svg></div></div>
</div></body></html>
